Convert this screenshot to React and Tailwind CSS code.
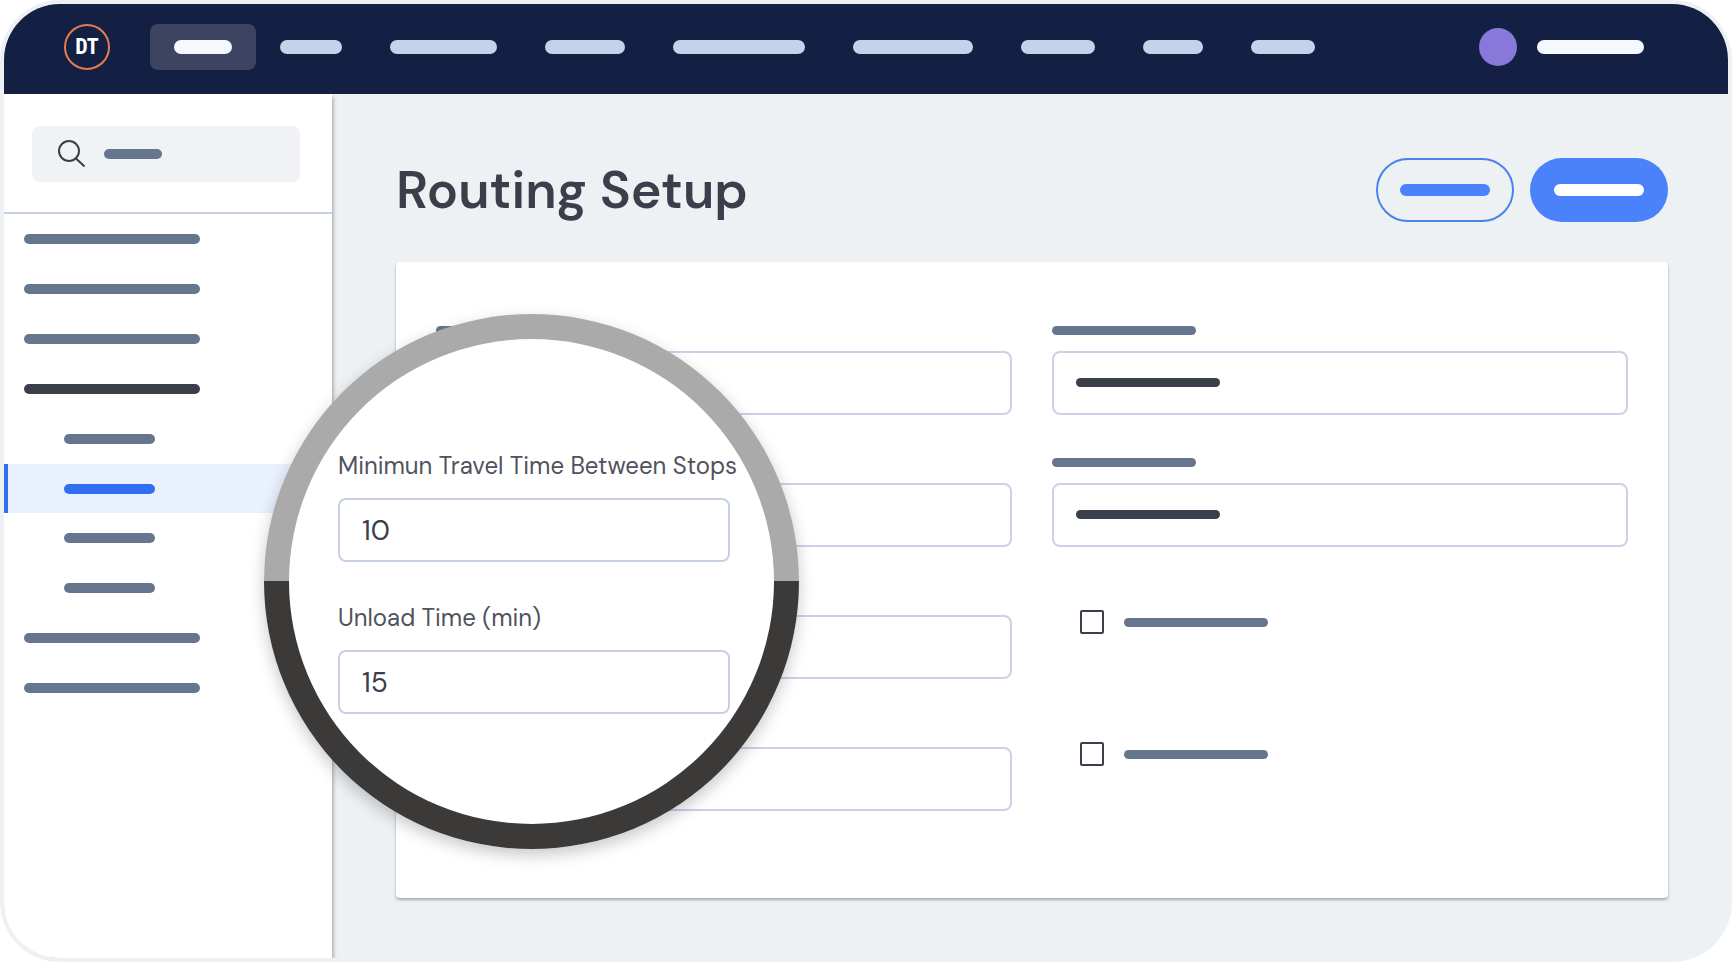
import { useState } from 'react';

const navItems = [
  { name: 'Dispatch', width: 'w-[62px]' },
  { name: 'Scheduling', width: 'w-[107px]' },
  { name: 'Orders', width: 'w-[80px]' },
  { name: 'Fleet', width: 'w-[132px]' },
  { name: 'Customers', width: 'w-[120px]' },
  { name: 'Reports', width: 'w-[74px]' },
  { name: 'Billing', width: 'w-[60px]' },
  { name: 'Admin', width: 'w-[64px]' },
];

const menuItems = [
  { name: 'General' },
  { name: 'Users' },
  { name: 'Locations' },
  { name: 'Routing', open: true },
  { name: 'Zones', sub: true },
  { name: 'Setup', sub: true, active: true },
  { name: 'Stops', sub: true },
  { name: 'Drivers', sub: true },
  { name: 'Alerts' },
  { name: 'Integrations' },
];

function Bar({ className }) {
  return <span className={`block shrink-0 rounded-full ${className}`} />;
}

function Header() {
  return (
    <header className="flex h-[90px] shrink-0 items-center rounded-t-[56px] bg-[#141f44] pr-[84px] pb-1 pl-[60px]">
      <a
        href="#"
        className="flex h-[46px] w-[46px] shrink-0 items-center justify-center rounded-full border-2 border-[#e57c4f] font-['Liberation_Sans_Narrow','Roboto_Condensed','Roboto',sans-serif] text-[22px] leading-none font-bold text-white"
      >
        DT
      </a>
      <nav className="ml-10 flex items-center">
        <a
          href="#"
          aria-label="Home"
          className="mr-6 flex h-[46px] w-[106px] items-center justify-center rounded-lg bg-[#3c4462]"
        >
          <Bar className="h-[14px] w-[58px] bg-[#f5f8fe]" />
        </a>
        <div className="flex items-center gap-12">
          {navItems.map((item) => (
            <a key={item.name} href="#" aria-label={item.name}>
              <Bar className={`h-[14px] bg-[#c5d2ea] ${item.width}`} />
            </a>
          ))}
        </div>
      </nav>
      <button type="button" aria-label="Account" className="ml-auto flex items-center gap-5">
        <span className="h-[38px] w-[38px] rounded-full bg-[#8878d9]" />
        <Bar className="h-[14px] w-[107px] bg-[#f5f8fe]" />
      </button>
    </header>
  );
}

function Sidebar() {
  return (
    <aside className="w-[328px] shrink-0 bg-white shadow-[1px_3px_4px_rgba(0,0,0,0.35)]">
      <div className="border-b-2 border-[#c7d0e8] pt-8 pr-8 pb-[30px] pl-7">
        <label className="flex h-14 items-center rounded-lg bg-[#f1f2f5] pl-[25px]">
          <svg className="h-7 w-7 shrink-0" viewBox="0 0 28 28" fill="none" stroke="#3c3f47" strokeWidth="2">
            <circle cx="12" cy="11" r="10" />
            <path d="M19 18.5L27.5 26.5" />
          </svg>
          <Bar className="ml-[19px] h-[10px] w-[58px] bg-[#67768f]" />
          <input type="search" aria-label="Search" className="min-w-0 flex-1 bg-transparent outline-none" />
        </label>
      </div>
      <nav>
        {menuItems.map((item) => (
          <a
            key={item.name}
            href="#"
            aria-label={item.name}
            className={`flex items-center ${
              item.active ? 'h-[49px] border-l-4 border-[#2f6ff0] bg-[#eaf1fe] pl-14' : 'h-[50px]'
            } ${item.sub ? (item.active ? '' : 'pl-[60px]') : 'pl-5'}`}
          >
            <Bar
              className={`h-[10px] ${item.sub ? 'w-[91px]' : 'w-[176px]'} ${
                item.active ? 'bg-[#2f6ff0]' : item.open ? 'bg-[#3b3f4c]' : 'bg-[#67768f]'
              }`}
            />
          </a>
        ))}
      </nav>
    </aside>
  );
}

function Field({ id, name }) {
  return (
    <div>
      <label htmlFor={id} className="block">
        <Bar className="h-[9px] w-36 bg-[#67768f]" />
      </label>
      <div className="mt-4 flex h-16 items-center rounded-lg border-2 border-[#cbd2e8] bg-white pb-px pl-[22px]">
        <Bar className="h-[9px] w-36 bg-[#3b3f4c]" />
        <input id={id} type="text" aria-label={name} className="min-w-0 flex-1 bg-transparent outline-none" />
      </div>
    </div>
  );
}

function CheckField({ id, name }) {
  const [checked, setChecked] = useState(false);

  return (
    <div className="flex h-16 items-center gap-5 pl-7">
      <input
        id={id}
        type="checkbox"
        aria-label={name}
        checked={checked}
        onChange={(e) => setChecked(e.target.checked)}
        className="h-6 w-6 appearance-none rounded-xs border-2 border-[#3b3f4c] bg-white checked:bg-[#4a82fb]"
      />
      <label htmlFor={id}>
        <Bar className="h-[9px] w-36 bg-[#67768f]" />
      </label>
    </div>
  );
}

function ZoomField({ id, label, value, onChange }) {
  return (
    <div>
      <label htmlFor={id} className="block text-[24px] leading-8 whitespace-nowrap text-[#50535e]">
        {label}
      </label>
      <input
        id={id}
        type="text"
        value={value}
        onChange={(e) => onChange(e.target.value)}
        className="mt-4 h-16 w-[392px] rounded-lg border-2 border-[#c7d0e8] bg-white px-[22px] text-[28px] text-[#3b3f4c] outline-none"
      />
    </div>
  );
}

// Magnifier that floats over the form
function Lens() {
  const [travelTime, setTravelTime] = useState('10');
  const [unloadTime, setUnloadTime] = useState('15');

  return (
    <div className="absolute top-[314px] left-[264px] h-[535px] w-[535px] rounded-full bg-linear-to-b from-[#aaaaaa] from-50% to-[#3b3a38] to-50% p-[25px] shadow-[0_6px_16px_rgba(0,0,0,0.22)]">
      <div className="flex h-full flex-col gap-10 rounded-full bg-white pt-[111px] pl-[49px]">
        <ZoomField
          id="travel-time"
          label="Minimun Travel Time Between Stops"
          value={travelTime}
          onChange={setTravelTime}
        />
        <ZoomField id="unload-time" label="Unload Time (min)" value={unloadTime} onChange={setUnloadTime} />
      </div>
    </div>
  );
}

export default function App() {
  return (
    <div className="min-h-screen bg-white font-['DM_Sans','Inter',sans-serif]">
      <div className="relative flex min-h-screen flex-col rounded-[60px] bg-[#edf1f4] p-1">
        <Header />
        <div className="flex flex-1 overflow-hidden rounded-bl-[56px]">
          <Sidebar />
          <main className="flex flex-1 flex-col pt-16 pr-[60px] pb-[60px] pl-16">
            <div className="flex items-center justify-between">
              <h1 className="text-[52px] leading-[64px] font-semibold text-[#3b3f4c]">Routing Setup</h1>
              <div className="flex gap-4">
                <button
                  type="button"
                  aria-label="Cancel"
                  className="flex h-16 w-[138px] items-center justify-center rounded-full border-2 border-[#4a82ec]"
                >
                  <Bar className="h-3 w-[90px] bg-[#4a82fb]" />
                </button>
                <button
                  type="button"
                  aria-label="Save"
                  className="flex h-16 w-[138px] items-center justify-center rounded-full bg-[#4a82fb]"
                >
                  <Bar className="h-3 w-[90px] bg-white" />
                </button>
              </div>
            </div>

            <form className="mt-10 grid flex-1 grid-cols-2 content-start gap-x-10 gap-y-[43px] rounded-sm bg-white px-10 pt-16 pb-10 shadow-[0_2px_3px_rgba(0,0,0,0.3)]">
              <Field id="min-travel" name="Minimum travel time" />
              <Field id="max-travel" name="Maximum travel time" />
              <Field id="unload" name="Unload time" />
              <Field id="load" name="Load time" />
              <Field id="capacity" name="Capacity" />
              <div className="flex items-start">
                <CheckField id="allow-overtime" name="Allow overtime" />
              </div>
              <Field id="max-stops" name="Maximum stops" />
              <div className="flex items-start">
                <CheckField id="auto-assign" name="Assign automatically" />
              </div>
            </form>
          </main>
        </div>
        <Lens />
      </div>
    </div>
  );
}
